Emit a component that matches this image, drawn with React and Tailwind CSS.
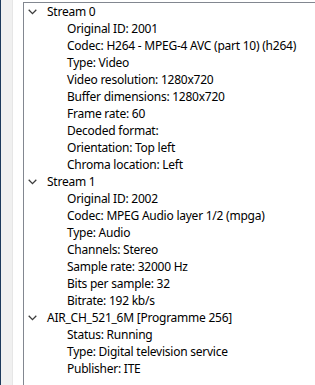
import React from 'react';

const tree = [
  {
    label: 'Stream 0',
    items: [
      'Original ID: 2001',
      'Codec: H264 - MPEG-4 AVC (part 10) (h264)',
      'Type: Video',
      'Video resolution: 1280x720',
      'Buffer dimensions: 1280x720',
      'Frame rate: 60',
      'Decoded format:',
      'Orientation: Top left',
      'Chroma location: Left',
    ],
  },
  {
    label: 'Stream 1',
    items: [
      'Original ID: 2002',
      'Codec: MPEG Audio layer 1/2 (mpga)',
      'Type: Audio',
      'Channels: Stereo',
      'Sample rate: 32000 Hz',
      'Bits per sample: 32',
      'Bitrate: 192 kb/s',
    ],
  },
  {
    label: 'AIR_CH_521_6M [Programme 256]',
    items: [
      'Status: Running',
      'Type: Digital television service',
      'Publisher: ITE',
    ],
  },
];

function Chevron() {
  return (
    <svg width="9" height="6" viewBox="0 0 9 6" className="shrink-0">
      <path d="M0.7 0.8 L4.5 4.6 L8.3 0.8" fill="none" stroke="#3c3c3c" strokeWidth="1.3" />
    </svg>
  );
}

export default function App() {
  return (
    <div
      className="flex h-[385px] w-[315px] overflow-hidden bg-white text-[12px] tracking-[-0.24px] text-black"
      style={{ fontFamily: '"Noto Sans", "Segoe UI", sans-serif' }}
    >
      <div className="w-px bg-[#1d3a5c]" />
      <div className="w-[11px] bg-[#f0f0f0]" />
      <div className="w-px bg-[#e6e6e6]" />
      <div className="w-[10px] bg-white" />
      <div className="flex-1 mt-[2px] border-l border-t border-[#828790] bg-white">
        {tree.map((node) => (
          <div key={node.label}>
            <div className="flex h-[17px] items-center whitespace-nowrap pl-[4px] pt-px">
              <span className="flex w-[19px] items-center"><Chevron /></span>
              <span>{node.label}</span>
            </div>
            {node.items.map((t) => (
              <div key={t} className="flex h-[17px] items-center whitespace-nowrap pl-[43px]">
                {t}
              </div>
            ))}
          </div>
        ))}
      </div>
    </div>
  );
}
